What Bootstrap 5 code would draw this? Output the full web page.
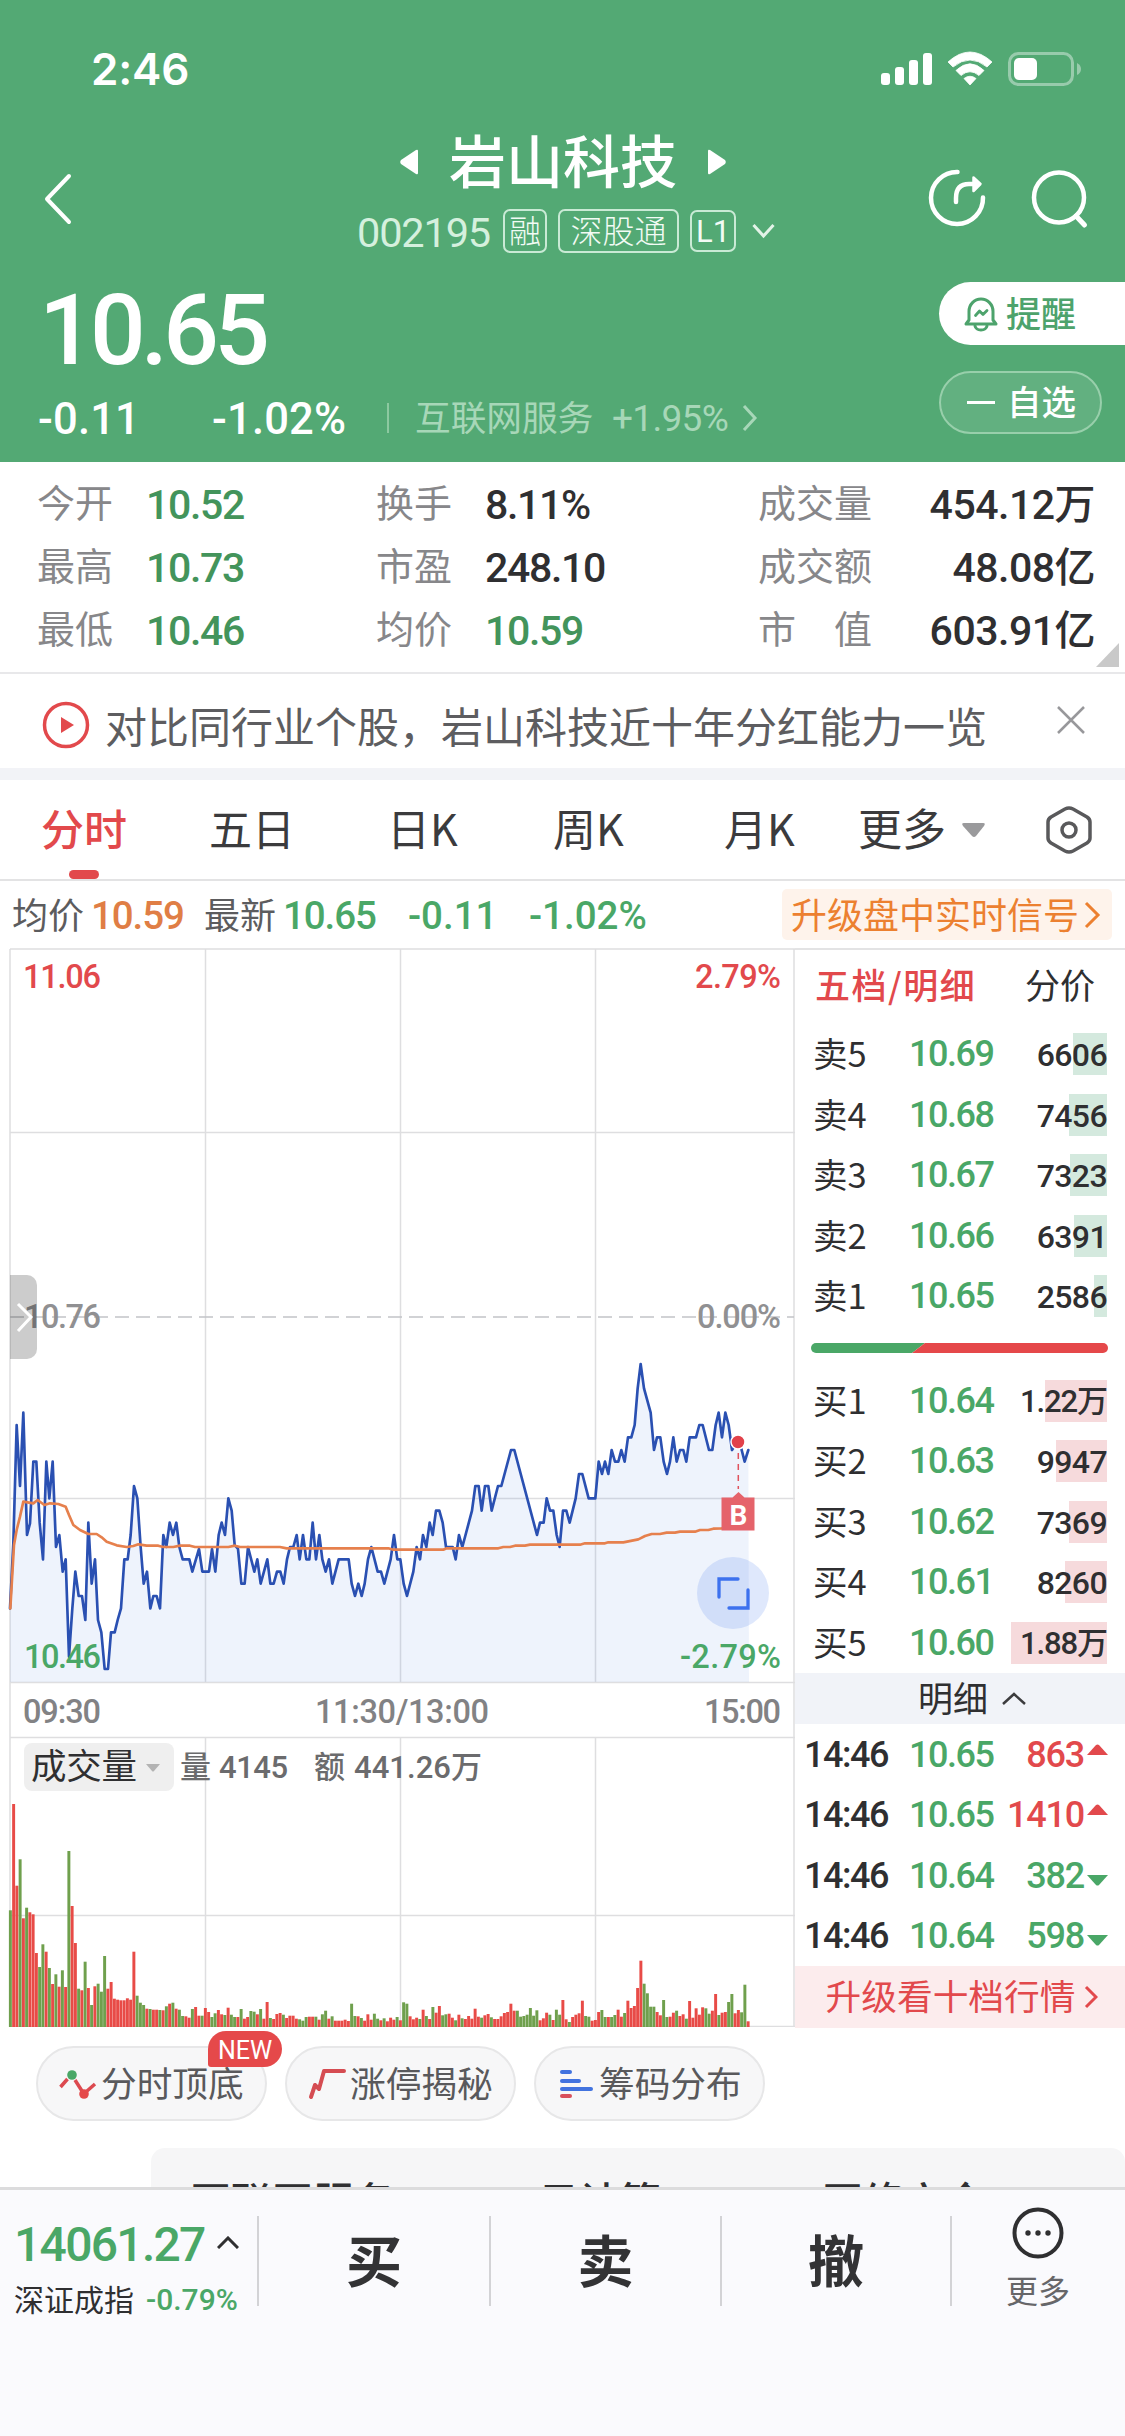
<!DOCTYPE html>
<html lang="zh-CN">
<head>
<meta charset="utf-8">
<meta name="viewport" content="width=device-width, initial-scale=1">
<title>岩山科技 002195</title>
<link href="https://cdn.jsdelivr.net/npm/bootstrap@5.3.0/dist/css/bootstrap.min.css" rel="stylesheet">
<style>
:root{--up:#e2494c;--down:#4aa767;--ink:#2f2f31;--line:#e3e3e4}
body{width:1125px;height:2436px;overflow:hidden;background:#fff;color:var(--ink);font-family:"Noto Sans CJK SC",sans-serif;line-height:1}
svg{display:block;flex:none}
.num{font-family:Roboto,"Noto Sans CJK SC",sans-serif;font-weight:500;line-height:1;white-space:nowrap}
.zh{line-height:1;padding-bottom:.11em;white-space:nowrap}
.down{color:var(--down)}.up{color:var(--up)}
.cols{display:grid;align-items:center}
/* header */
.quote-head{height:462px;background:#53a974;color:#fff}
.status-bar{height:116px;padding:22px 43px 0 91px}
.clock{font:600 44px/1 Inter,sans-serif;letter-spacing:-.2px}
.title-bar{height:142px;padding:0 35px 0 43px}
.title-mid{margin-left:133px}
.stock-name{font-size:57px;font-weight:500;height:74px}
.code-line{height:44px;margin-top:10px}
.code-line .num{font-size:41.5px;font-weight:400;letter-spacing:-1.15px;color:#d5f0de;width:146px;padding-top:3px}
.tag{border:2px solid #c9ead5;border-radius:7px;height:44px;font-size:32px;font-weight:300;display:flex;align-items:center;justify-content:center;color:#f2fbf5;white-space:nowrap}
.price-now{font-size:98px;letter-spacing:-4.8px;margin:24px 0 0 39px}
.chg-line{grid-template-columns:174px 175px 28px 197px 129px 30px;margin:14px 0 0 38px;height:48px}
.chg-line .num{font-size:43.5px;letter-spacing:.2px;padding-top:4px}
.chg-line .num.soft{font-size:37px;font-weight:400;letter-spacing:-.7px;padding-top:0}
.soft{color:#a7d7b8}
.pill-alert{width:186px;height:63px;background:#fff;border-radius:32px 0 0 32px;color:#4da36c;font-size:35px;font-weight:500;padding-left:24px;gap:7px}
.pill-fav{width:163px;height:63px;border:2px solid #98cfab;background:rgba(255,255,255,.09);border-radius:32px;font-size:34.5px;font-weight:500;margin-top:26px;padding-left:26px;gap:12px}
/* figures */
.figures{height:212px;border-bottom:2px solid #e8e8ea;padding-top:12px;position:relative}
.figures .cols{grid-template-columns:109px 230px 109px 273px 132px 205px;padding-left:37px;height:63px}
.figures .zh{font-size:38px;color:#87878a;padding-bottom:9px}
.figures .num{font-size:41px;letter-spacing:-1.3px}
.figures .num.text-end{letter-spacing:-.5px}
.figures .down{color:#43945b}
.fold{position:absolute;right:6px;bottom:5px}
/* promo */
.promo{height:94px;padding:8px 40px 0 42px;font-size:42px;color:#5d5d60}
.band{height:12px;background:#f2f3f7}
.chart-tabs{height:101px;border-bottom:2px solid var(--line);grid-template-columns:168px 178px 166px 171px 134px 187px 60px;padding-left:41px;font-size:43px;color:#3b3b3d;position:relative}
.chart-tabs .on{color:var(--up);font-weight:500}
.tab-mark{position:absolute;left:69px;bottom:0;width:30px;height:9px;border-radius:5px;background:var(--up)}
.brief{height:67px;grid-template-columns:79px 113px 79px 125px 121px 253px 330px;padding-left:12px;font-size:36px;color:#5c5c5e}
.brief .num{font-size:38.5px;letter-spacing:-1.1px;padding-top:4px}
.brief .num.wide{letter-spacing:0}
.signal-link{background:#fef3eb;color:#ec8030;height:51px;border-radius:5px;padding:0 11px 0 9px}
/* order book */
.book{width:330px;border-top:2px solid var(--line)}
.book-tabs{height:74px;padding:0 30px 4px 20px;font-size:35px}
.book-tabs .up{letter-spacing:1.5px}
.lv{grid-template-columns:96px 85px 1fr;height:60.5px;padding:0 18px 0 18px;font-size:34.5px}
.lv .num,.tick .num{font-size:36px;letter-spacing:-1.5px}
.vol-cell{position:relative;height:42px}
.vol-bar{position:absolute;right:0;top:0;height:42px}
.ask .vol-bar{background:#d4e9de}.bid .vol-bar{background:#f6dadc}
.lv .vol-cell .num{position:relative;font-size:32px;letter-spacing:-.6px;padding-top:2px}
.lv .vol-cell .num.wan{font-size:31px;letter-spacing:-1.1px}
.tick .num.qty{letter-spacing:-1.2px}
.lv-name{font-family:"Noto Sans CJK SC",sans-serif;white-space:nowrap}
.tick-head{height:51px;background:#f1f3f8;font-size:35px;gap:14px;padding-left:24px}
.tick{grid-template-columns:105px 85px 1fr;height:60.5px;padding:1px 17px 0 9px}
.ten-link{height:62px;background:#fceced;color:var(--up);font-size:35.7px;gap:9px;padding-left:4px}
/* tools */
.tools{height:121px;padding:19px 0 0 36px;gap:18px}
.tool{width:231px;height:75px;border:2px solid #e7e7e8;border-radius:38px;background:#f7f7f8;font-size:35.7px;color:#59595c;padding-left:21px;gap:4px;position:relative}
.new-tag{position:absolute;left:170px;top:-17px;width:74px;height:36px;border-radius:18px 18px 18px 3px;background:#e5494a;color:#fff;font:400 25px/39px Roboto,sans-serif;text-align:center}
.sector{margin-left:151px;height:39px;background:#f6f6f7;border-radius:14px 14px 0 0;overflow:hidden;grid-template-columns:348px 284px 1fr;padding:31px 0 0 39px;font-size:41px;font-weight:500;align-items:start}
.trade-bar{height:249px;background:#fafafd;border-top:3px solid #dcdcdd}
.index-box{width:257px;padding:30px 0 0 14px}
.index-box .big{font-size:48px;letter-spacing:-1.7px;font-weight:500;height:50px}
.act{font-size:56px;font-weight:700;height:90px;margin-top:26px;border-left:2px solid #d3d3d6;color:#333335}
.more{width:174px;height:90px;margin-top:26px;border-left:2px solid #d3d3d6;font-size:32px;color:#666669}
text{font-family:Roboto,"Noto Sans CJK SC",sans-serif;font-weight:500}
.cjk{font-family:"Noto Sans CJK SC",sans-serif}
</style>
</head>
<body>
<header class="quote-head">
  <div class="status-bar d-flex align-items-center justify-content-between">
    <span class="clock">2:46</span>
    <svg width="202" height="36" viewBox="881 51 202 36" fill="#fff"><rect x="882" y="73" width="9" height="12" rx="3"/><rect x="896" y="67" width="9" height="18" rx="3"/><rect x="910" y="60" width="9" height="25" rx="3"/><rect x="924" y="53" width="9" height="32" rx="3"/>
      <path d="M949 62Q971 42 993 62L988 67Q971 53 954 67ZM957 70.500Q971 57 985 70.500L980 75.500Q971 68 962 75.500ZM965 78.500Q971 74 977 78.500L971 85Z" stroke="#fff" stroke-linejoin="round" stroke-width=".8"/>
      <rect x="1010.500" y="53.500" width="63" height="31" rx="9" fill="none" stroke="#98cbac" stroke-width="3"/><rect x="1015" y="58" width="23" height="22" rx="5"/><path d="M1078 63q4 2 4 6t-4 6z" fill="#98cbac"/></svg>
  </div>
  <div class="title-bar d-flex justify-content-between">
    <svg class="align-self-center" style="margin-top:24px" width="30" height="52" viewBox="0 0 30 52" fill="none" stroke="#fff" stroke-width="4" stroke-linecap="round" stroke-linejoin="round"><path d="M26 3 4 26 26 49"/></svg>
    <div class="title-mid d-flex flex-column align-items-center">
      <div class="stock-name d-flex align-items-center" style="gap:29px;margin-top:9px;margin-left:-6px"><svg width="20" height="26" fill="#fff"><path d="M18 2v22q0 2-2 1L1 15q-1.500-2 0-4L16 1q2-1 2 1z"/></svg><span class="zh">岩山科技</span><svg width="20" height="26" fill="#fff"><path d="M2 2v22q0 2 2 1l15-10q1.500-2 0-4L4 1Q2 0 2 2z"/></svg></div>
      <div class="code-line d-flex align-items-center"><span class="num">002195</span><span class="tag" style="width:44px"><span class="zh">融</span></span><span class="tag" style="width:121px;margin-left:11px"><span class="zh">深股通</span></span><span class="tag" style="width:46px;height:42px;margin-left:11px;font:400 31px/1 Roboto,sans-serif">L1</span><svg style="margin-left:16px" width="23" height="16" fill="none" stroke="#e3f3e8" stroke-width="3"><path d="m1.500 2 10 11 10-11"/></svg></div>
    </div>
    <svg class="align-self-center" style="margin-top:24px" width="164" height="62" viewBox="926 168 164 62" fill="none" stroke="#fff" stroke-width="4.500" stroke-linecap="round" stroke-linejoin="round"><path d="M957.500 172A26 26 0 1 0 983 197.500M956 202v-4q0-14 13-14h7"/><path d="m973.500 177.500 7 6.500-7 7z" fill="#fff" stroke-width="2.500"/><circle cx="1059" cy="197.500" r="25"/><path d="m1076 216 8.500 9" stroke-width="5"/></svg>
  </div>
  <div class="d-flex justify-content-between">
    <div>
      <div class="num price-now">10.65</div>
      <div class="cols chg-line"><span class="num">-0.11</span><span class="num">-1.02%</span><i style="width:2px;height:30px;background:#8cc9a0"></i><span class="zh soft" style="font-size:35.700px">互联网服务</span><span class="num soft">+1.95%</span><svg width="18" height="28" fill="none" stroke="#a7d7b8" stroke-width="3"><path d="m3 2 11 12L3 26"/></svg></div>
    </div>
    <div style="width:186px;padding-top:24px">
      <div class="pill-alert d-flex align-items-center"><svg width="36" height="36" viewBox="0 0 36 36" fill="none" stroke="#4da36c" stroke-width="3" stroke-linecap="round" stroke-linejoin="round"><path d="M3 28h30l-3-4v-8.500a12 12.500 0 0 0-24 0V24zM12 30q1 4 6 4t6-4"/><path d="m12.500 19.500 4-4.500 3.500 3.500 4-4" stroke-width="2.800"/></svg><span class="zh">提醒</span></div>
      <div class="pill-fav d-flex align-items-center"><i style="width:28px;height:3px;background:#fff"></i><span class="zh">自选</span></div>
    </div>
  </div>
</header>

<section class="figures">
  <div class="cols"><span class="zh">今开</span><span class="num down">10.52</span><span class="zh">换手</span><span class="num">8.11%</span><span class="zh">成交量</span><span class="num text-end">454.12万</span></div>
  <div class="cols"><span class="zh">最高</span><span class="num down">10.73</span><span class="zh">市盈</span><span class="num">248.10</span><span class="zh">成交额</span><span class="num text-end">48.08亿</span></div>
  <div class="cols"><span class="zh">最低</span><span class="num down">10.46</span><span class="zh">均价</span><span class="num down">10.59</span><span class="zh">市　值</span><span class="num text-end">603.91亿</span></div>
  <svg class="fold" width="23" height="24" fill="#c9c9c9"><path d="M23 0v24H0z"/></svg>
</section>

<section class="promo d-flex align-items-center">
  <svg width="48" height="48" fill="none" stroke="#e2494c" stroke-width="3.500"><circle cx="24" cy="24" r="21.500"/><path d="M19 16v16l13-8z" fill="#e2494c" stroke="none"/></svg>
  <span class="zh" style="margin-left:15px;padding-bottom:1px">对比同行业个股，岩山科技近十年分红能力一览</span>
  <svg class="ms-auto" style="margin-bottom:10px" width="28" height="28" stroke="#98989b" stroke-width="2.500"><path d="m1 1 26 26M27 1 1 27"/></svg>
</section>
<div class="band"></div>

<nav class="cols chart-tabs">
  <span class="zh on">分时</span><span class="zh">五日</span><span class="zh">日K</span><span class="zh">周K</span><span class="zh">月K</span>
  <span class="zh d-flex align-items-center" style="font-size:44px;gap:16px">更多<svg style="margin-top:6px" width="24" height="16" fill="#9a9a9c"><path d="M2 1h19q3 0 1 3l-8 10q-2 2-4 0L1 4q-2-3 1-3z"/></svg></span>
  <svg width="48" height="50" fill="none" stroke="#59595b" stroke-width="3.500" stroke-linejoin="round"><path d="M24 3q2 0 4 1l14 8q3 2 3 5v16q0 3-3 5l-14 8q-4 2-8 0L6 38q-3-2-3-5V17q0-3 3-5l14-8q2-1 4-1z"/><circle cx="24" cy="25" r="7"/></svg>
  <i class="tab-mark"></i>
</nav>
<div class="cols brief"><span class="zh">均价</span><span class="num" style="color:#e07e45">10.59</span><span class="zh">最新</span><span class="num down">10.65</span><span class="num down wide">-0.11</span><span class="num down wide">-1.02%</span>
  <div class="signal-link d-flex align-items-center justify-content-between"><span class="zh">升级盘中实时信号</span><svg width="17" height="28" fill="none" stroke="#ec8030" stroke-width="3"><path d="m2 2 12 12L2 26"/></svg></div></div>

<main class="d-flex" style="height:1079px">
  <svg width="795" height="1079" viewBox="0 948 795 1079">
    <g fill="none" stroke="#dedee0" stroke-width="1.500">
      <path d="M10 949H795M10 1132.500H795M10 1498.500H795M10 1682.500H795M10 1737.500H795M10 1915.500H795M10 2026.500H795M10 949V2027M794 949V2027"/>
      <path d="M205.500 949V1682M400.500 949V1682M595.500 949V1682M205.500 1738V2027M400.500 1738V2027M595.500 1738V2027"/>
      <path d="M10 1317H794" stroke="#c2c3c8" stroke-dasharray="14 7"/>
    </g>
    <g transform="translate(0 1250) scale(.33333)" fill="none" stroke-linejoin="round" stroke-linecap="round">
      <path id="area" fill="#5a8ce6" fill-opacity=".1"/>
      <polyline id="price" stroke="#2a50b2" stroke-width="8" points="30,1075 40,880 50,525 60,708 70,488 81,855 90,820 100,635 109,635 119,818 129,928 139,635 148,745 158,635 168,891 178,855 188,965 197,928 207,1220 217,1075 226,965 236,1038 246,1038 256,1110 265,818 275,1001 285,928 294,1110 304,1147 314,1257 324,1257 333,1147 344,1147 353,1110 363,1075 373,928 383,928 392,855 402,708 412,745 422,891 431,1001 441,965 451,1075 460,1038 470,1038 480,1075 490,855 499,891 509,818 519,855 529,818 538,891 548,928 568,928 577,965 597,897 607,965 627,965 636,897 646,965 656,855 665,818 675,855 685,745 695,782 704,885 714,897 724,1001 734,1001 744,891 763,965 772,928 782,1001 802,928 811,1001 821,1001 831,965 841,965 851,1001 861,928 870,891 880,891 890,855 899,928 909,855 919,928 928,928 938,818 948,928 958,855 967,928 977,965 987,928 997,1001 1016,928 1046,928 1055,1001 1065,1038 1075,1001 1085,1038 1094,1001 1104,928 1114,891 1133,965 1143,965 1153,1001 1172,928 1182,855 1192,928 1201,928 1211,1001 1221,1038 1240,965 1250,891 1260,928 1269,855 1279,891 1289,818 1298,855 1308,782 1318,782 1328,818 1338,891 1358,891 1367,928 1377,855 1387,891 1416,782 1426,708 1436,708 1445,782 1455,708 1465,708 1475,782 1494,708 1504,708 1533,600 1543,600 1611,855 1620,818 1631,818 1640,745 1650,782 1660,782 1670,855 1679,891 1689,782 1699,782 1709,818 1727,745 1737,672 1747,672 1766,745 1786,745 1796,635 1806,672 1815,635 1825,672 1835,600 1845,635 1855,635 1864,600 1874,635 1884,562 1894,562 1904,525 1913,415 1922,342 1932,415 1952,488 1962,600 1971,562 1981,562 1991,635 2001,672 2010,635 2020,562 2030,635 2040,600 2050,600 2059,635 2069,562 2088,562 2098,525 2108,525 2127,600 2137,600 2147,525 2156,488 2166,562 2176,488 2186,525 2196,600 2215,570 2225,600 2234,635 2245,600"/>
      <polyline stroke="#e6804d" stroke-width="8" points="31,1075 42,885 50,840 60,800 70,755 100,760 113,750 133,765 150,760 175,762 197,770 207,795 220,825 240,840 265,852 290,852 305,862 320,875 350,886 380,891 400,888 415,883 440,887 475,887 490,891 520,891 540,887 570,887 585,891 685,891 705,887 720,891 840,891 860,895 1165,895 1180,899 1330,899 1340,895 1495,895 1510,891 1530,891 1545,887 1575,887 1590,884 1740,884 1755,880 1815,880 1825,877 1870,877 1915,868 1935,858 1955,852 1980,852 2000,848 2025,848 2040,845 2085,845 2100,840 2125,840 2140,836 2165,835 2200,832 2240,825"/>
    </g>
    <g id="bars"></g>
    <circle cx="738" cy="1442" r="7" fill="#e2414a" stroke="#fff" stroke-width="1.500"/><path d="M738.300 1453v36" stroke="#e0525d" stroke-width="1.500" stroke-dasharray="6 5"/>
    <path d="m738.500 1492 6 5.500h10v33h-33v-33h11z" fill="#e5636b"/><text x="738.500" y="1524.500" font-size="28" text-anchor="middle" fill="#fff" style="font-weight:700">B</text>
    <circle cx="733" cy="1593" r="36" fill="#4e7fec" fill-opacity=".18"/><path d="M738 1579h-19v18M729 1608h19v-18" fill="none" stroke="#3d71ee" stroke-width="3.300" stroke-linecap="round"/>
    <g font-size="32.500">
      <g fill="#e2494c"><text x="23" y="988" textLength="78">11.06</text><text x="695" y="988" textLength="86">2.79%</text></g>
      <g fill="#909092"><text x="24" y="1328" textLength="77">10.76</text><text x="697" y="1328" textLength="84">0.00%</text></g>
      <g fill="#4aa767"><text x="24" y="1668" textLength="77">10.46</text><text x="680" y="1668" textLength="101">-2.79%</text></g>
      <g fill="#828284"><text x="23" y="1723" textLength="78">09:30</text><text x="315" y="1723" textLength="174">11:30/13:00</text><text x="704" y="1723" textLength="77">15:00</text></g>
    </g>
    <path d="M10 1275h17a10 10 0 0 1 10 10v64a10 10 0 0 1-10 10H10z" fill="#000" fill-opacity=".2"/><path d="m18 1304 13 13-13 14" fill="none" stroke="#fff" stroke-width="3"/>
    <rect x="24" y="1743" width="150" height="48" rx="8" fill="#efefef"/>
    <text class="cjk" x="31" y="1779" font-size="35.500" textLength="106" fill="#2f2f31" style="font-weight:400">成交量</text><path d="M146 1764h14l-6 7q-1 1-2 0z" fill="#b3b3b3"/>
    <g fill="#6b6b6d" font-size="31"><text x="180" y="1778">量</text><text x="219" y="1778" textLength="69">4145</text><text x="314" y="1778">额</text><text x="354" y="1778" textLength="128">441.26万</text></g>
  </svg>

  <aside class="book">
    <div class="book-tabs d-flex align-items-center justify-content-between"><span class="zh up" style="font-weight:500">五档/明细</span><span class="zh">分价</span></div>
    <div class="ask" id="asks"></div>
    <svg style="margin:16px 0 18px 16px" width="297" height="10"><path d="M5 0h109l-13 10H5A5 5 0 0 1 5 0z" fill="#4aa767"/><path d="M114 0h178a5 5 0 0 1 0 10H101z" fill="#e5484a"/></svg>
    <div class="bid" id="bids"></div>
    <div class="tick-head d-flex align-items-center justify-content-center" ><span class="zh">明细</span><svg width="24" height="13" fill="none" stroke="#3c3c3e" stroke-width="2.500"><path d="M1 12 12 2l11 10"/></svg></div>
    <div id="ticks"></div>
    <div class="ten-link d-flex align-items-center justify-content-center"><span class="zh">升级看十档行情</span><svg width="14" height="24" fill="none" stroke="#e2494c" stroke-width="3"><path d="m2 2 10 10L2 22"/></svg></div>
  </aside>
</main>

<section class="tools d-flex">
  <div class="tool d-flex align-items-center"><svg width="38" height="32" viewBox="59 2068 38 32" fill="none" stroke="#dc4a50" stroke-width="3.500"><path d="m60.500 2087 7-8M75 2080l7 11M87 2091l8-7"/><circle cx="72" cy="2075" r="4.800" fill="#4aa767" stroke="none"/><circle cx="84" cy="2094" r="4.800" fill="#e5494a" stroke="none"/></svg><span class="zh">分时顶底</span><span class="new-tag">NEW</span></div>
  <div class="tool d-flex align-items-center"><svg width="38" height="32" viewBox="309 2068 38 32" fill="none" stroke="#d54c52" stroke-width="4" stroke-linejoin="round" stroke-linecap="round"><path d="m312 2097 4-12 4 4 5-18h20"/></svg><span class="zh">涨停揭秘</span></div>
  <div class="tool d-flex align-items-center"><svg width="38" height="32"><g fill="#4273df"><rect x="3" y="2" width="12" height="4" rx="2"/><rect x="3" y="11" width="21" height="4" rx="2"/><rect x="3" y="19" width="33" height="4" rx="2"/></g><rect x="3" y="26" width="12" height="4" rx="2" fill="#d9505c"/></svg><span class="zh">筹码分布</span></div>
</section>
<section class="cols sector"><span class="zh">互联网服务</span><span class="zh">云计算</span><span class="zh">网络安全</span></section>

<footer class="trade-bar d-flex align-items-start">
  <div class="index-box">
    <div class="d-flex align-items-center big"><span class="num down">14061.27</span><svg style="margin:-5px 0 0 12px" width="22" height="13" fill="none" stroke="#2f2f31" stroke-width="3"><path d="m1 12 10-10 10 10"/></svg></div>
    <div class="d-flex align-items-center" style="margin-top:13px;font-size:30px;gap:12px"><span class="zh">深证成指</span><span class="num down">-0.79%</span></div>
  </div>
  <div class="act d-flex align-items-center justify-content-center" style="width:232px"><span class="zh">买</span></div>
  <div class="act d-flex align-items-center justify-content-center" style="width:231px"><span class="zh">卖</span></div>
  <div class="act d-flex align-items-center justify-content-center" style="width:230px"><span class="zh">撤</span></div>
  <div class="more d-flex flex-column align-items-center"><svg style="margin-top:-9px" width="52" height="52" fill="none" stroke="#2f2f31" stroke-width="4"><circle cx="26" cy="26" r="23.500"/><g fill="#2f2f31" stroke="none"><circle cx="16" cy="26" r="2.700"/><circle cx="26" cy="26" r="2.700"/><circle cx="36" cy="26" r="2.700"/></g></svg><span class="zh" style="margin-top:14px">更多</span></div>
</footer>

<script src="https://cdn.jsdelivr.net/npm/bootstrap@5.3.0/dist/js/bootstrap.bundle.min.js"></script>
<script>
// shaded area below the price line
document.getElementById('area').setAttribute('d','M30,1296L'+document.getElementById('price').getAttribute('points')+'L2247,1296Z');
// one volume bar per minute: direction and height in thirds of a pixel
const vols='g350 r669 r424 g503 r326 g358 r344 r338 r222 g180 g248 r226 g177 r129 g158 r121 g170 r120 g528 r363 r252 g115 r110 g196 r117 g66 r122 g130 g106 g213 r115 r135 r85 r82 r80 r80 r86 r82 r226 g94 g73 g66 r55 g54 r52 r52 g51 r50 g62 r70 g73 r55 g52 g33 r32 r28 g54 r60 r34 g34 r57 r45 g30 g41 r51 r38 g36 r58 g37 g30 r30 g54 r25 r30 g48 g46 r38 g54 r25 r75 g27 r24 r39 r42 g37 r27 r34 r34 r25 g23 g19 g30 r31 r31 g31 r22 g38 g49 r25 g32 r19 r19 r19 r22 r18 g70 g33 r32 g27 r19 r38 r22 g40 g25 r20 g26 r17 r28 r22 g30 r20 g74 g70 r32 r23 r28 g24 r52 g33 r24 g60 r43 r63 g35 g38 r40 r28 g20 r37 g26 r24 r33 r25 r55 r31 g28 r35 r39 g29 r24 r24 r32 r42 r45 r70 r49 g49 g31 g33 g37 g57 g34 g50 r20 r26 r43 g37 r21 g52 g37 r81 r23 g15 r30 r37 r41 r79 g33 g31 r19 r21 r45 g51 g30 r30 g30 g36 r52 r31 g42 r79 r57 r63 r117 r199 g130 g101 g61 g61 r45 r35 g81 g30 r31 r43 g49 r33 r38 g25 r78 r28 r56 r37 r59 g56 g40 r49 r99 g36 r43 r45 g75 g99 r41 r51 g44 g127 r17'.split(' ');
document.getElementById('bars').innerHTML=vols.map((v,i)=>{const h=v.slice(1)/3;return `<rect x="${(8.9+i*3.25).toFixed(2)}" y="${(2027-h).toFixed(1)}" width="2.950" height="${h.toFixed(1)}" fill="${v[0]=='g'?'#6fa04d':'#e84b47'}"/>`}).join('');
const level=([n,p,v,w])=>`<div class="cols lv"><span class="zh lv-name">${n}</span><span class="num down">${p}</span><div class="vol-cell d-flex align-items-center justify-content-end"><i class="vol-bar" style="width:${w}px"></i><span class="num ${v.includes('万')?'wan':''}">${v}</span></div></div>`;
document.getElementById('asks').innerHTML=[['卖5','10.69','6606',34],['卖4','10.68','7456',38],['卖3','10.67','7323',37],['卖2','10.66','6391',33],['卖1','10.65','2586',13]].map(level).join('');
document.getElementById('bids').innerHTML=[['买1','10.64','1.22万',62],['买2','10.63','9947',51],['买3','10.62','7369',38],['买4','10.61','8260',42],['买5','10.60','1.88万',96]].map(level).join('');
document.getElementById('ticks').innerHTML=[['10.65','863',1],['10.65','1410',1],['10.64','382',0],['10.64','598',0]].map(([p,v,u])=>`<div class="cols tick"><span class="num">14:46</span><span class="num down">${p}</span><span class="d-flex align-items-center justify-content-end ${u?'up':'down'}"><span class="num qty">${v}</span><svg style="margin-left:3px" width="21" height="32" fill="currentColor"><path d="${u?'M0 16 9 6q1.500-1 3 0l9 10z':'M0 15h21l-9 10q-1.500 1-3 0z'}"/></svg></span></div>`).join('');
</script>
</body>
</html>
